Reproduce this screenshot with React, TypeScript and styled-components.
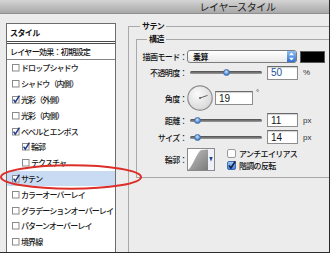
import styled, { createGlobalStyle } from 'styled-components';

const GlobalStyle = createGlobalStyle`
  html, body { margin: 0; padding: 0; background: #fff; }
  body { font-family: "Noto Sans CJK JP", "Noto Sans", sans-serif; color: #111; }
`;

type Effect = { name: string; checked?: boolean; indent?: boolean; selected?: boolean };

const effects: Effect[] = [
  { name: 'ドロップシャドウ' },
  { name: 'シャドウ（内側）' },
  { name: '光彩（外側）', checked: true },
  { name: '光彩（内側）' },
  { name: 'ベベルとエンボス', checked: true },
  { name: '輪郭', checked: true, indent: true },
  { name: 'テクスチャ', indent: true },
  { name: 'サテン', checked: true, selected: true },
  { name: 'カラーオーバーレイ' },
  { name: 'グラデーションオーバーレイ' },
  { name: 'パターンオーバーレイ' },
  { name: '境界線' },
];

function ListCheck({ checked }: { checked?: boolean }) {
  return (
    <CheckSvg width="8" height="9" viewBox="0 0 8 9">
      <rect x="0.5" y="1.5" width="6.5" height="6.5" fill="#fff" stroke="#8a8a8a" />
      {checked && <path d="M1.6 4.6 L3.3 7.2 L7.4 0.6" fill="none" stroke="#1f3a84" strokeWidth="1.5" />}
    </CheckSvg>
  );
}

function AquaCheck({ checked }: { checked?: boolean }) {
  return (
    <CheckSvg width="9" height="9" viewBox="0 0 9 9">
      <defs>
        <linearGradient id="aq" x1="0" y1="0" x2="0" y2="1">
          <stop offset="0" stopColor="#a9cdf5" />
          <stop offset="1" stopColor="#3f7fd6" />
        </linearGradient>
      </defs>
      <rect x="0.5" y="0.5" width="8" height="8" rx="1.5"
        fill={checked ? 'url(#aq)' : '#fff'} stroke={checked ? '#3d6db4' : '#9a9a9a'} />
      {checked && <path d="M2 4.4 L3.9 7 L8.4 0.2" fill="none" stroke="#14224a" strokeWidth="1.6" />}
    </CheckSvg>
  );
}

function Slider({ value }: { value: number }) {
  return (
    <Track>
      <Knob style={{ left: `${value * 72 - 3.5}px` }} />
    </Track>
  );
}

function Dial({ angle }: { angle: number }) {
  const r = (angle * Math.PI) / 180;
  const x = 13 + 8 * Math.cos(r);
  const y = 13 - 8 * Math.sin(r);
  return (
    <svg width="26" height="26" viewBox="0 0 26 26">
      <defs>
        <radialGradient id="dl" cx="0.4" cy="0.35" r="0.7">
          <stop offset="0" stopColor="#fbfbfb" />
          <stop offset="1" stopColor="#d6d6d6" />
        </radialGradient>
      </defs>
      <circle cx="13" cy="13" r="12.2" fill="url(#dl)" stroke="#8d8d8d" strokeWidth="1.2" />
      <line x1="13" y1="13" x2={x} y2={y} stroke="#555" strokeWidth="0.9" />
      <circle cx="13" cy="13" r="0.9" fill="#555" />
    </svg>
  );
}

function Contour() {
  return (
    <svg width="28" height="23" viewBox="0 0 28 23">
      <defs>
        <linearGradient id="ct" x1="0" y1="0" x2="1" y2="1">
          <stop offset="0" stopColor="#c4c4c4" />
          <stop offset="1" stopColor="#7a7a7a" />
        </linearGradient>
      </defs>
      <rect x="0.5" y="0.5" width="27" height="22" fill="#fff" stroke="#8a8a8a" />
      <path d="M1 22 C 6 18, 9 6, 14 2 L 21 1.5 L 21 22 Z" fill="url(#ct)" />
      <rect x="21" y="1" width="6" height="21" fill="#eef2f8" />
      <path d="M22.3 9 L25.7 9 L24 13.5 Z" fill="#1c3f8e" />
    </svg>
  );
}

function Stepper() {
  return (
    <StepperBox>
      <svg width="9" height="11" viewBox="0 0 9 11">
        <path d="M4.5 1.5 L7 4.3 L2 4.3 Z" fill="#fff" />
        <path d="M4.5 9.5 L7 6.7 L2 6.7 Z" fill="#fff" />
      </svg>
    </StepperBox>
  );
}

export default function App() {
  return (
    <Window>
      <GlobalStyle />
      <TitleBar>レイヤースタイル</TitleBar>
      <Body>
        <StyleList>
          <ListHeader>スタイル</ListHeader>
          <PresetRow>レイヤー効果：初期設定</PresetRow>
          {effects.map((e) => (
            <EffectRow key={e.name} $indent={e.indent} $selected={e.selected}>
              <ListCheck checked={e.checked} />
              <EffectName>{e.name}</EffectName>
            </EffectRow>
          ))}
        </StyleList>

        <OuterGroup>
          <GroupTitle $offset={4}>サテン</GroupTitle>
          <InnerGroup>
            <GroupTitle $offset={10}>構造</GroupTitle>

            <Row $h={13} $top={6}>
              <Label>描画モード：</Label>
              <Select>
                <SelectText>乗算</SelectText>
                <Stepper />
              </Select>
              <Swatch />
            </Row>

            <Row $h={15} $top={2}>
              <Label>不透明度：</Label>
              <SliderSlot>
                <Slider value={0.5} />
              </SliderSlot>
              <NumberBox $w={31} $accent>50</NumberBox>
              <Unit>%</Unit>
            </Row>

            <Row $h={26} $top={5}>
              <Label>角度：</Label>
              <Dial angle={19} />
              <NumberBox $w={38} $gap={2}>19</NumberBox>
              <Degree>°</Degree>
            </Row>

            <Row $h={14} $top={2}>
              <Label>距離：</Label>
              <SliderSlot>
                <Slider value={0.1} />
              </SliderSlot>
              <NumberBox $w={31}>11</NumberBox>
              <Unit>px</Unit>
            </Row>

            <Row $h={14} $top={3}>
              <Label>サイズ：</Label>
              <SliderSlot>
                <Slider value={0.1} />
              </SliderSlot>
              <NumberBox $w={31}>14</NumberBox>
              <Unit>px</Unit>
            </Row>

            <Row $h={23} $top={4}>
              <Label>輪郭：</Label>
              <Contour />
              <Options>
                <Option>
                  <AquaCheck />
                  <OptionText>アンチエイリアス</OptionText>
                </Option>
                <Option>
                  <AquaCheck checked />
                  <OptionText>階調の反転</OptionText>
                </Option>
              </Options>
            </Row>
          </InnerGroup>
        </OuterGroup>
      </Body>

      <Annotation width="144" height="28" viewBox="0 0 144 28">
        <ellipse cx="71" cy="14" rx="70" ry="11.8" fill="none" stroke="#dc2f2a" strokeWidth="2" />
      </Annotation>
    </Window>
  );
}

const Window = styled.div`
  position: relative;
  width: 330px;
  height: 253px;
  box-sizing: border-box;
  overflow: hidden;
  display: flex;
  flex-direction: column;
  background: #ececec;
  border-right: 1px solid #2b2b2b;
  border-bottom: 1px solid #2b2b2b;
`;

const TitleBar = styled.div`
  flex: none;
  height: 13px;
  display: flex;
  align-items: center;
  justify-content: center;
  padding-left: 146px;
  background: linear-gradient(#d4d4d4, #a8a8a8);
  border-bottom: 1px solid #8f8f8f;
  font-size: 10px;
  letter-spacing: -0.4px;
  color: #1a1a1a;
`;

const Body = styled.div`
  flex: 1;
  display: flex;
  padding-top: 9px;
  min-height: 0;
`;

const StyleList = styled.div`
  flex: none;
  width: 110px;
  height: 250px;
  margin-left: 6px;
  box-sizing: border-box;
  display: flex;
  flex-direction: column;
  background: #fff;
  border: 1px solid #6c6c6c;
`;

const ListHeader = styled.div`
  height: 17px;
  display: flex;
  align-items: center;
  padding-left: 3px;
  border-bottom: 3px double #4a4a4a;
  font-size: 8px;
  font-weight: 700;
  letter-spacing: -0.6px;
`;

const PresetRow = styled.div`
  height: 15px;
  display: flex;
  align-items: center;
  padding-left: 3px;
  border-bottom: 1px solid #858585;
  font-size: 8px;
  font-weight: 500;
  letter-spacing: -0.7px;
  white-space: nowrap;
`;

const EffectRow = styled.div<{ $indent?: boolean; $selected?: boolean }>`
  height: 15.8px;
  flex: none;
  display: flex;
  align-items: center;
  padding-left: ${(p) => (p.$indent ? '15px' : '5px')};
  background: ${(p) => (p.$selected ? '#c8dbf3' : 'transparent')};
`;

const CheckSvg = styled.svg`
  flex: none;
  overflow: visible;
`;

const EffectName = styled.span`
  margin-left: 1px;
  font-size: 8px;
  font-weight: 500;
  letter-spacing: -0.9px;
  white-space: nowrap;
  color: #1a1a1a;
`;

const OuterGroup = styled.fieldset`
  flex: none;
  align-self: flex-start;
  width: 260px;
  height: 260px;
  margin: -2px 0 0 12px;
  padding: 0 0 0 7px;
  box-sizing: border-box;
  min-width: 0;
  border: 1px solid #a9a9a9;
`;

const InnerGroup = styled.fieldset`
  width: 200px;
  margin: 3px 0 0 0;
  padding: 0 0 6px 0;
  box-sizing: border-box;
  min-width: 0;
  border: 1px solid #a9a9a9;
`;

const GroupTitle = styled.legend<{ $offset: number }>`
  margin-left: ${(p) => p.$offset}px;
  padding: 0 2px;
  font-size: 8px;
  line-height: 10px;
  font-weight: 700;
  letter-spacing: -0.6px;
`;

const Row = styled.div<{ $h: number; $top: number }>`
  display: flex;
  align-items: center;
  height: ${(p) => p.$h}px;
  margin-top: ${(p) => p.$top}px;
`;

const Label = styled.span`
  flex: none;
  width: 50px;
  text-align: right;
  white-space: nowrap;
  font-size: 8px;
  font-weight: 500;
  letter-spacing: -0.6px;
`;

const Select = styled.div`
  flex: none;
  width: 110px;
  height: 13px;
  box-sizing: border-box;
  display: flex;
  align-items: center;
  border: 1px solid #7d7d7d;
  border-radius: 3px;
  background: linear-gradient(#ffffff, #e9e9e9);
  overflow: hidden;
`;

const SelectText = styled.span`
  flex: 1;
  padding-left: 5px;
  font-size: 8px;
  font-weight: 700;
  letter-spacing: -0.5px;
`;

const StepperBox = styled.div`
  flex: none;
  width: 9px;
  height: 100%;
  display: flex;
  align-items: center;
  justify-content: center;
  background: linear-gradient(#8fc0f2, #2f6fd0);
`;

const Swatch = styled.div`
  flex: none;
  width: 25px;
  height: 12px;
  margin-left: 3px;
  background: #000;
  border: 1px solid #5a5a5a;
  box-sizing: border-box;
`;

const SliderSlot = styled.div`
  flex: none;
  width: 72px;
  margin-left: 3px;
`;

const Track = styled.div`
  position: relative;
  height: 3px;
  border-radius: 2px;
  background: linear-gradient(#4c4c4c, #9c9c9c);
`;

const Knob = styled.div`
  position: absolute;
  top: -2px;
  width: 7px;
  height: 7px;
  border-radius: 50%;
  background: radial-gradient(circle at 45% 35%, #d2e6fb, #3c7fd8 70%);
  border: 1px solid #4a6fa3;
  box-sizing: border-box;
`;

const NumberBox = styled.div<{ $w: number; $gap?: number; $accent?: boolean }>`
  flex: none;
  width: ${(p) => p.$w}px;
  height: 14px;
  margin-left: ${(p) => p.$gap ?? 5}px;
  box-sizing: border-box;
  display: flex;
  align-items: center;
  padding-left: 3px;
  background: #fff;
  border: 1px solid #8e8e8e;
  border-top-color: #6a6a6a;
  box-shadow: inset 0 1px 1px rgba(0, 0, 0, 0.18);
  font-family: "Liberation Sans", Arial, sans-serif;
  font-size: 10px;
  color: ${(p) => (p.$accent ? '#244f9c' : '#161616')};
`;

const Unit = styled.span`
  margin-left: 5px;
  font-family: "Liberation Sans", Arial, sans-serif;
  font-size: 8px;
  color: #333;
`;

const Degree = styled.span`
  align-self: flex-start;
  margin: 3px 0 0 3px;
  font-family: "Liberation Sans", Arial, sans-serif;
  font-size: 8px;
  color: #333;
`;

const Options = styled.div`
  display: flex;
  flex-direction: column;
  gap: 3px;
  margin-left: 12px;
`;

const Option = styled.div`
  display: flex;
  align-items: center;
  height: 9px;
`;

const OptionText = styled.span`
  margin-left: 3px;
  font-size: 8px;
  font-weight: 500;
  letter-spacing: -0.7px;
  white-space: nowrap;
`;

const Annotation = styled.svg`
  position: absolute;
  left: 0;
  top: 163px;
  pointer-events: none;
`;
